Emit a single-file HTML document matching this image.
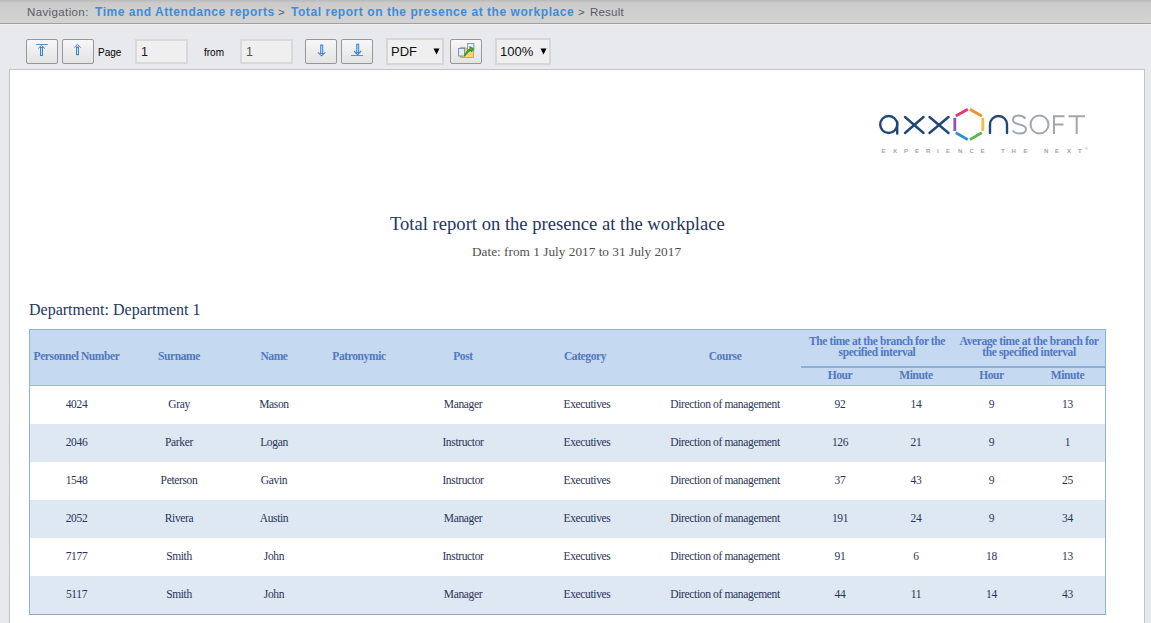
<!DOCTYPE html>
<html><head><meta charset="utf-8">
<style>
*{margin:0;padding:0;box-sizing:border-box}
html,body{width:1151px;height:623px;overflow:hidden;background:#e8e9ec;font-family:"Liberation Sans",sans-serif;position:relative}
.a{position:absolute;white-space:nowrap}
#nav{left:0;top:0;width:1151px;height:25px;background:linear-gradient(#b9b9b9 0,#cbcbcb 3px,#cfcfcf 12px,#d3d3d1 23px);border-bottom:1px solid #f0f1f3;box-shadow:inset 0 -1px 0 #a0a0a0}
.nv{top:5px;font-size:11.5px;color:#585c66;line-height:14px}
.nb{font-weight:bold;color:#3d8cdb}
.btn{position:absolute;top:39px;width:32px;height:25px;border:1px solid #979797;border-radius:2px;background:linear-gradient(#f7f7f7,#e3e3e3)}
.btn svg{position:absolute;left:-1px;top:-1px}
.inp{position:absolute;top:39px;height:25px;border:2px solid #d9d9d9;background:#efefef;font-size:12.5px;color:#1a1a1a;padding:4px 0 0 4px;line-height:14px}
.lbl{position:absolute;font-size:10px;color:#000;top:47px;line-height:12px}
.sel{position:absolute;top:38px;height:27px;border:2px solid #d6d6d6;background:#efefef;font-size:14px;color:#111;line-height:16px}
#page{left:9px;top:69px;width:1136px;height:570px;background:#fff;border:1px solid #c4c4c4}
.serif{font-family:"Liberation Serif",serif}
#title{left:390px;top:213px;font-size:18.6px;color:#233563;line-height:22px}
#date{left:472px;top:244px;font-size:13.3px;color:#4f4f4f;line-height:16px}
#dept{left:29px;top:301px;font-size:16px;color:#233563;line-height:18px}
table{position:absolute;left:29px;top:329px;border-collapse:separate;border-spacing:0;table-layout:fixed;width:1077px;font-family:"Liberation Serif",serif;font-size:11px;border:1px solid #8fb0dd;border-bottom-color:#93a7c4}
th{background:#c5d9f1;color:#5277bf;font-weight:bold;text-align:center;line-height:11px;padding:0 0 2px 0;font-size:11.5px;letter-spacing:-0.4px;border-bottom:1px solid #9bb7dc}
th.g{border-bottom:2px solid #8eaedc}
td{text-align:center;color:#2b3358;height:38px;padding:0 0 2px 0;font-size:11.5px;letter-spacing:-0.35px}
tr.alt td{background:#dde8f3}
td:nth-child(6){padding-left:4px}
</style></head><body>
<div id="nav" class="a"></div>
<div class="a nv" style="left:27px;letter-spacing:0.38px">Navigation:</div>
<div class="a nv nb" style="left:95px;letter-spacing:0.53px;font-size:12px">Time and Attendance reports</div>
<div class="a nv" style="left:278px">&gt;</div>
<div class="a nv nb" style="left:291px;letter-spacing:0.55px;font-size:12px">Total report on the presence at the workplace</div>
<div class="a nv" style="left:578px">&gt;</div>
<div class="a nv" style="left:590px;letter-spacing:0.2px">Result</div>

<div class="btn" style="left:26px"><svg width="32" height="25"><line x1="10" y1="5.5" x2="22" y2="5.5" stroke="#5b8ed0" stroke-width="1"/><path d="M12.1 9.6 L15.5 6.3 L18.9 9.6" stroke="#4a6fb0" stroke-width="0.9" fill="none"/><rect x="14.5" y="8.5" width="2" height="8" fill="#b4ecfd" stroke="#3f80d8" stroke-width="1"/></svg></div>
<div class="btn" style="left:62px"><svg width="32" height="25"><path d="M12.2 8.7 L15.5 5.3 L18.8 8.7" stroke="#4a6fb0" stroke-width="0.9" fill="none"/><rect x="14.5" y="8" width="2" height="7.7" fill="#b4ecfd" stroke="#3f80d8" stroke-width="1"/></svg></div>
<div class="lbl" style="left:98px">Page</div>
<div class="inp" style="left:135px;width:53px">1</div>
<div class="lbl" style="left:204px">from</div>
<div class="inp" style="left:240px;width:53px;color:#555">1</div>
<div class="btn" style="left:305px"><svg width="32" height="25"><rect x="15.7" y="6" width="2" height="8.5" fill="#b4ecfd" stroke="#3f80d8" stroke-width="1"/><path d="M12.9 13.3 L16.6 16.8 L20.2 13.3" stroke="#3f7fd0" stroke-width="1.1" fill="none"/></svg></div>
<div class="btn" style="left:341px"><svg width="32" height="25"><rect x="15.7" y="5.2" width="2" height="8.3" fill="#b4ecfd" stroke="#3f80d8" stroke-width="1"/><path d="M13 12 L16.6 15.6 L20.2 12" stroke="#3f7fd0" stroke-width="1.1" fill="none"/><line x1="10" y1="16.5" x2="22" y2="16.5" stroke="#5b8ed0" stroke-width="1"/></svg></div>
<div class="sel" style="left:386px;width:58px"><span class="a" style="left:3px;top:4px;font-size:13px">PDF</span><svg class="a" style="left:45px;top:8px" width="8" height="8"><path d="M0.5 0.5 H6.5 L3.5 6.5Z" fill="#000"/></svg></div>
<div class="btn" style="left:450px"><svg width="32" height="25"><path d="M10.5 8.3 h4.5 l1 1.2 h7.5 v9 h-13z" fill="#f1d873" stroke="#caa640" stroke-width="0.9"/><rect x="17.6" y="4.6" width="6.2" height="7.2" fill="#eef6fd" stroke="#7287a8" stroke-width="0.9"/><rect x="8.6" y="9.4" width="6" height="7.6" fill="#e2effa" stroke="#6d84a6" stroke-width="0.9"/><path d="M14.6 17.2 C15.5 13.5 17.5 10.5 20.2 9.6 L19.6 7.6 L23.6 9.4 L21.4 12.8 L20.9 11.2 C18.6 12.3 16.8 14.8 14.6 17.2Z" fill="#3db32b" stroke="#1f7d17" stroke-width="0.7"/></svg></div>
<div class="sel" style="left:495px;width:56px"><span class="a" style="left:3px;top:4px;font-size:13px">100%</span><svg class="a" style="left:43px;top:8px" width="8" height="8"><path d="M0.5 0.5 H6.5 L3.5 6.5Z" fill="#000"/></svg></div>

<div id="page" class="a"></div>

<svg class="a" style="left:870px;top:100px" width="230" height="60" viewBox="870 100 230 60">
 <g fill="none" stroke="#1e4777" stroke-width="2.4" stroke-linecap="round">
  <circle cx="888.7" cy="124.5" r="8.5"/>
  <line x1="897.2" y1="122" x2="897.2" y2="133.5"/>
  <line x1="905" y1="117" x2="923.5" y2="133"/><line x1="923.5" y1="117" x2="905" y2="133"/>
  <line x1="929.5" y1="117" x2="948.5" y2="133"/><line x1="948.5" y1="117" x2="929.5" y2="133"/>
  <path d="M990 133 V124.5 A8.5 8.5 0 0 1 1007 124.5 V133"/>
 </g>
 <g fill="none" stroke-width="2.8" stroke-linecap="butt">
  <line x1="955.8" y1="116.0" x2="967.8" y2="109.2" stroke="#e2376f"/>
  <line x1="969.8" y1="109.2" x2="981.8" y2="116.0" stroke="#f0902a"/>
  <line x1="982.8" y1="117.8" x2="982.8" y2="131.0" stroke="#f2c031"/>
  <line x1="981.8" y1="132.8" x2="969.8" y2="139.6" stroke="#5cb546"/>
  <line x1="967.8" y1="139.6" x2="955.8" y2="132.8" stroke="#2b8fd3"/>
  <line x1="954.8" y1="131.0" x2="954.8" y2="117.8" stroke="#8b58a8"/>
 </g>
 <g fill="none" stroke="#a2a5ae" stroke-width="2">
  <path d="M1025.5 118.5 C1023 116 1020 115.5 1018.5 115.5 C1015 115.5 1013 117.5 1013 120 C1013 126 1026 123 1026 129 C1026 132 1023.5 133.5 1019.5 133.5 C1016.5 133.5 1014 132.5 1012.5 130.5"/>
  <circle cx="1039.5" cy="124.5" r="9"/>
  <path d="M1064.5 116.3 H1054 V134 M1054 124.5 H1063.5"/>
  <path d="M1068.5 116.3 H1085 M1076.7 116.3 V134"/>
 </g>
 <g font-family="Liberation Sans" font-size="6" font-weight="bold" fill="#a4a4a4">
  <text x="881.5" y="153">E</text><text x="893" y="153">X</text><text x="904" y="153">P</text><text x="915" y="153">E</text><text x="926" y="153">R</text><text x="937" y="153">I</text><text x="946" y="153">E</text><text x="958" y="153">N</text><text x="969.5" y="153">C</text><text x="980.5" y="153">E</text>
  <text x="1001" y="153">T</text><text x="1011.5" y="153">H</text><text x="1023.5" y="153">E</text>
  <text x="1044" y="153">N</text><text x="1055" y="153">E</text><text x="1067" y="153">X</text><text x="1078" y="153">T</text><text x="1085" y="150" font-size="4">®</text>
 </g>
</svg>

<div id="title" class="a serif">Total report on the presence at the workplace</div>
<div id="date" class="a serif">Date: from 1 July 2017 to 31 July 2017</div>
<div id="dept" class="a serif">Department: Department 1</div>
<table>
<colgroup><col style="width:93px"><col style="width:112px"><col style="width:78px"><col style="width:92px"><col style="width:116px"><col style="width:128px"><col style="width:152px"><col style="width:78px"><col style="width:74px"><col style="width:77px"><col style="width:75px"></colgroup>
<tr style="height:38px"><th rowspan="2">Personnel Number</th><th rowspan="2">Surname</th><th rowspan="2">Name</th><th rowspan="2">Patronymic</th><th rowspan="2">Post</th><th rowspan="2">Category</th><th rowspan="2">Course</th><th colspan="2" class="g">The time at the branch for the specified interval</th><th colspan="2" class="g">Average time at the branch for the specified interval</th></tr>
<tr style="height:18px"><th>Hour</th><th>Minute</th><th>Hour</th><th>Minute</th></tr>
<tr><td>4024</td><td>Gray</td><td>Mason</td><td></td><td>Manager</td><td>Executives</td><td>Direction of management</td><td>92</td><td>14</td><td>9</td><td>13</td></tr>
<tr class="alt"><td>2046</td><td>Parker</td><td>Logan</td><td></td><td>Instructor</td><td>Executives</td><td>Direction of management</td><td>126</td><td>21</td><td>9</td><td>1</td></tr>
<tr><td>1548</td><td>Peterson</td><td>Gavin</td><td></td><td>Instructor</td><td>Executives</td><td>Direction of management</td><td>37</td><td>43</td><td>9</td><td>25</td></tr>
<tr class="alt"><td>2052</td><td>Rivera</td><td>Austin</td><td></td><td>Manager</td><td>Executives</td><td>Direction of management</td><td>191</td><td>24</td><td>9</td><td>34</td></tr>
<tr><td>7177</td><td>Smith</td><td>John</td><td></td><td>Instructor</td><td>Executives</td><td>Direction of management</td><td>91</td><td>6</td><td>18</td><td>13</td></tr>
<tr class="alt"><td>5117</td><td>Smith</td><td>John</td><td></td><td>Manager</td><td>Executives</td><td>Direction of management</td><td>44</td><td>11</td><td>14</td><td>43</td></tr>
</table>
</body></html>
